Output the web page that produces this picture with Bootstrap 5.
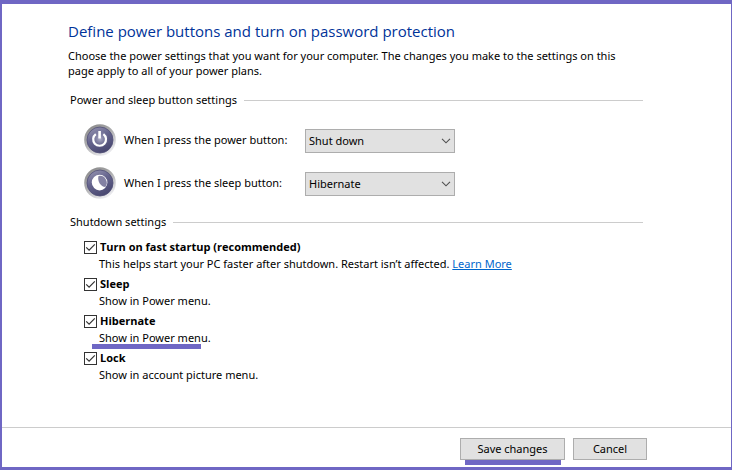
<!DOCTYPE html>
<html lang="en">
<head>
<meta charset="utf-8">
<meta name="viewport" content="width=device-width, initial-scale=1">
<title>Power Options</title>
<link href="https://cdn.jsdelivr.net/npm/bootstrap@5.3.0/dist/css/bootstrap.min.css" rel="stylesheet">
<style>
  :root { --accent: #6f67c4; --face: #e1e1e1; --edge: #adadad; --rule: #cccccc; }
  body { font-family: "Noto Sans", "Open Sans", sans-serif; font-size: 11px; line-height: 15px; color: #000; background: #fff; }
  .window { border: solid var(--accent); border-width: 4px 1px 3px 2px; }
  .content { padding: 15px 88px 16px 66px; }
  .title { font-family: "Open Sans", sans-serif; font-size: 15px; line-height: 24px; font-weight: 400; color: #003399; margin-bottom: 5px; }
  .intro { margin-bottom: 14px; padding-right: 12px; }
  .group { padding-left: 2px; }
  .group-title { font-size: 11px; font-weight: 400; line-height: 16px; gap: 7px; }
  .group-title::after { content: ""; flex: 1; height: 1px; background: var(--rule); }
  .buttons { padding: 16px 0 0 14px; margin-bottom: 15px; }
  .setting { height: 32px; margin-bottom: 11px; }
  .setting svg { width: 32px; height: 32px; margin-right: 8px; flex: none; }
  .setting label { width: 181px; padding-bottom: 1px; }
  .setting select { width: 150px; height: 24px; margin-top: 2px; padding: 0 24px 0 3px; border: 1px solid var(--edge); border-radius: 0; background-color: var(--face); color: #000; font-size: 11px; line-height: 22px;
    background-image: url("data:image/svg+xml,%3Csvg xmlns='http://www.w3.org/2000/svg' viewBox='0 0 10 6'%3E%3Cpath d='M1 .8l4 4 4-4' fill='none' stroke='%23505050' stroke-width='1.1'/%3E%3C/svg%3E"); background-size: 10px 6px; background-position: right 3px center; }
  .options { padding: 8px 0 0 14px; line-height: 17px; }
  .option { margin-bottom: 3px; }
  .option-head { gap: 3px; }
  .option label { font-family: "Open Sans", sans-serif; font-weight: 700; }
  .option input { width: 13px; height: 13px; margin: 3px 0 0; border: 1px solid #333; }
  .option input.form-check-input[type=checkbox] { border-radius: 0; }
  .option input.form-check-input:checked { background-color: #fff; border-color: #333; background-size: 11px 11px;
    background-image: url("data:image/svg+xml,%3Csvg xmlns='http://www.w3.org/2000/svg' viewBox='0 0 11 11'%3E%3Cpath d='M1.2 5.3l2.9 2.9 5.7-5.8' fill='none' stroke='%23333' stroke-width='1.2'/%3E%3C/svg%3E"); }
  .option p { padding-left: 15px; }
  .option a { color: #0066cc; }
  .marker::after { content: ""; position: absolute; height: 5px; background: var(--accent); }
  .marker-text::after { left: 8px; right: 10px; bottom: -3px; }
  .marker-button::after { left: 4px; right: 3px; bottom: -6px; }
  .actions { border-top: 1px solid var(--rule); padding: 10px 84px 7px 16px; gap: 8px; }
  .actions .btn { height: 22px; padding: 0; border: 1px solid var(--edge); border-radius: 0; background: var(--face); color: #000; font-size: 11px; line-height: 20px; width: 74px; }
  .actions .btn-save { width: 105px; }
</style>
</head>
<body>
<form class="window min-vh-100 d-flex flex-column">
  <main class="content flex-grow-1">
    <h1 class="title">Define power buttons and turn on password protection</h1>
    <p class="intro">Choose the power settings that you want for your computer. The changes you make to the settings on this page apply to all of your power plans.</p>

    <section class="group">
      <h2 class="group-title d-flex align-items-center mb-0">Power and sleep button settings</h2>
      <div class="buttons">
        <div class="setting d-flex align-items-center">
          <svg viewBox="0 0 32 32" aria-hidden="true">
            <defs>
              <linearGradient id="rim" x1=".1" y1="0" x2=".7" y2="1"><stop offset="0" stop-color="#858585"/><stop offset=".5" stop-color="#b0b0b2"/><stop offset="1" stop-color="#f0f0f4"/></linearGradient>
              <linearGradient id="face" x1="0" y1="0" x2=".5" y2="1"><stop offset="0" stop-color="#9c9bb6"/><stop offset=".5" stop-color="#66658e"/><stop offset="1" stop-color="#4a4972"/></linearGradient>
              <radialGradient id="glow"><stop offset="0" stop-color="#c4c4d8" stop-opacity=".8"/><stop offset="1" stop-color="#8988aa" stop-opacity="0"/></radialGradient>
            </defs>
            <circle cx="16" cy="16" r="15.8" fill="url(#rim)"/>
            <circle cx="16" cy="16" r="13" fill="url(#face)" stroke="#504f76" stroke-width=".8"/>
            <circle cx="16" cy="15" r="9" fill="url(#glow)"/>
            <path d="M11.800 10.200a6.400 6.400 0 1 0 7.600 0" fill="none" stroke="#fff" stroke-width="2.2"/>
            <path d="M15.600 7v7.500" stroke="#fff" stroke-width="2.6"/>
          </svg>
          <label for="power">When I press the power button:</label>
          <select id="power" class="form-select"><option>Shut down</option><option>Sleep</option><option>Hibernate</option></select>
        </div>
        <div class="setting d-flex align-items-center">
          <svg viewBox="0 0 32 32" aria-hidden="true">
            <circle cx="16" cy="16" r="15.8" fill="url(#rim)"/>
            <circle cx="16" cy="16" r="13" fill="url(#face)" stroke="#504f76" stroke-width=".8"/>
            <circle cx="15.6" cy="15.6" r="7.8" fill="#fff"/>
            <path d="M14.500 9a6.900 6.900 0 0 1 6.800 11C17 20 13 14 14.500 9z" fill="#8381a3"/>
          </svg>
          <label for="sleep">When I press the sleep button:</label>
          <select id="sleep" class="form-select"><option>Hibernate</option><option>Sleep</option><option>Shut down</option></select>
        </div>
      </div>
    </section>

    <section class="group">
      <h2 class="group-title d-flex align-items-center mb-0">Shutdown settings</h2>
      <div class="options">
        <div class="option">
          <div class="option-head d-flex"><input class="form-check-input" type="checkbox" id="fast" checked><label for="fast">Turn on fast startup (recommended)</label></div>
          <p class="mb-0">This helps start your PC faster after shutdown. Restart isn’t affected. <a href="#">Learn More</a></p>
        </div>
        <div class="option">
          <div class="option-head d-flex"><input class="form-check-input" type="checkbox" id="showsleep" checked><label for="showsleep">Sleep</label></div>
          <p class="mb-0">Show in Power menu.</p>
        </div>
        <div class="option">
          <div class="option-head d-flex"><input class="form-check-input" type="checkbox" id="showhib" checked><label for="showhib">Hibernate</label></div>
          <p class="mb-0 d-table position-relative marker marker-text">Show in Power menu.</p>
        </div>
        <div class="option">
          <div class="option-head d-flex"><input class="form-check-input" type="checkbox" id="lock" checked><label for="lock">Lock</label></div>
          <p class="mb-0">Show in account picture menu.</p>
        </div>
      </div>
    </section>
  </main>
  <footer class="actions d-flex justify-content-end">
    <button type="submit" class="btn btn-save position-relative marker marker-button">Save changes</button>
    <button type="button" class="btn">Cancel</button>
  </footer>
</form>
<script src="https://cdn.jsdelivr.net/npm/bootstrap@5.3.0/dist/js/bootstrap.bundle.min.js"></script>
</body>
</html>
